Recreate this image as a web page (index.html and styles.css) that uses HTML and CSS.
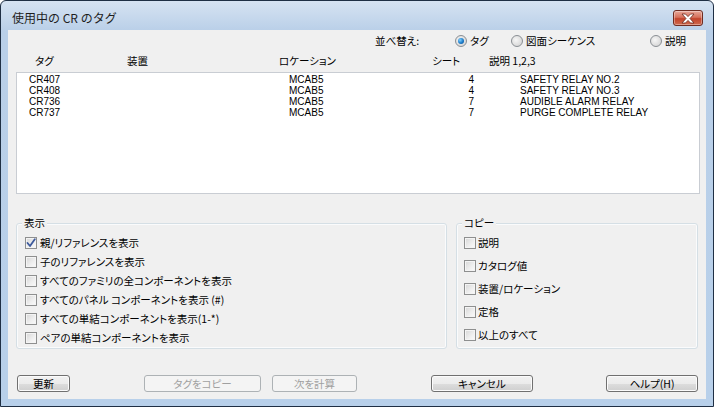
FILE: index.html
```html
<!DOCTYPE html>
<html lang="ja">
<head>
<meta charset="utf-8">
<title>使用中の CR のタグ</title>
<link rel="stylesheet" href="styles.css">
</head>
<body>
<div class="window">
  <div class="titlebar">
    <span class="title">使用中の CR のタグ</span>
    <div class="close">
      <svg width="16" height="11" viewBox="0 0 16 11"><path d="M2 1 L5.5 1 L8 3.6 L10.5 1 L14 1 L10 5.5 L14 10 L10.5 10 L8 7.4 L5.5 10 L2 10 L6 5.5 Z" fill="#fff" stroke="#6b2a20" stroke-width="0.8" stroke-linejoin="round"/></svg>
    </div>
  </div>
  <div class="content">
    <div class="sortrow">
      <span class="sortlabel">並べ替え:</span>
      <span class="ropt w1"><span class="radio on"></span><span>タグ</span></span>
      <span class="ropt w2"><span class="radio"></span><span>図面シーケンス</span></span>
      <span class="ropt"><span class="radio"></span><span>説明</span></span>
    </div>
    <div class="colheads">
      <span>タグ</span><span>装置</span><span>ロケーション</span><span>シート</span><span>説明 1,2,3</span>
    </div>
    <div class="listbox">
      <div class="row"><span>CR407</span><span>MCAB5</span><span class="num">4</span><span class="desc">SAFETY RELAY NO.2</span></div>
      <div class="row"><span>CR408</span><span>MCAB5</span><span class="num">4</span><span class="desc">SAFETY RELAY NO.3</span></div>
      <div class="row"><span>CR736</span><span>MCAB5</span><span class="num">7</span><span class="desc">AUDIBLE ALARM RELAY</span></div>
      <div class="row"><span>CR737</span><span>MCAB5</span><span class="num">7</span><span class="desc">PURGE COMPLETE RELAY</span></div>
    </div>
    <div class="groups">
      <div class="group show">
        <span class="glabel">表示</span>
        <div class="crow"><span class="cb checked"><svg width="10" height="10" viewBox="0 0 10 10"><path d="M1.5 5 L4 8 L8.8 1.2" fill="none" stroke="#3d5a9c" stroke-width="1.8" stroke-linecap="round" stroke-linejoin="round"/></svg></span><span>親/リファレンスを表示</span></div>
        <div class="crow"><span class="cb"></span><span>子のリファレンスを表示</span></div>
        <div class="crow"><span class="cb"></span><span>すべてのファミリの全コンポーネントを表示</span></div>
        <div class="crow"><span class="cb"></span><span>すべてのパネル コンポーネントを表示 (#)</span></div>
        <div class="crow"><span class="cb"></span><span>すべての単結コンポーネントを表示(1-*)</span></div>
        <div class="crow"><span class="cb"></span><span>ペアの単結コンポーネントを表示</span></div>
      </div>
      <div class="group copy">
        <span class="glabel">コピー</span>
        <div class="crow"><span class="cb"></span><span>説明</span></div>
        <div class="crow"><span class="cb"></span><span>カタログ値</span></div>
        <div class="crow"><span class="cb"></span><span>装置/ロケーション</span></div>
        <div class="crow"><span class="cb"></span><span>定格</span></div>
        <div class="crow"><span class="cb"></span><span>以上のすべて</span></div>
      </div>
    </div>
    <div class="buttons">
      <span class="btn b1">更新</span>
      <span class="btn b2 disabled">タグをコピー</span>
      <span class="btn b3 disabled">次を計算</span>
      <span class="btn b4">キャンセル</span>
      <span class="btn b5">ヘルプ(H)</span>
    </div>
  </div>
</div>
</body>
</html>
```
FILE: styles.css
```css
* { box-sizing: border-box; }
html, body { margin: 0; padding: 0; background: #ffffff; }
body {
  font-family: "Noto Sans CJK JP", "Noto Sans", sans-serif;
  font-size: 10.5px;
  color: #000;
  font-feature-settings: "palt";
}
.window {
  width: 714px;
  height: 407px;
  border: 1px solid #1f2f44;
  border-radius: 6px 6px 0 0;
  background: linear-gradient(to bottom, #d6e3f2 0px, #b9cfe8 30px, #b8d0ea 100%);
  display: flex;
  flex-direction: column;
  overflow: hidden;
}
.titlebar {
  height: 29px;
  flex: none;
  display: flex;
  align-items: flex-start;
  justify-content: space-between;
  padding: 9px 10px 0 11px;
}
.title {
  font-size: 12px;
  line-height: 16px;
  font-feature-settings: normal;
  color: #1e1e1e;
}
.close {
  width: 30px;
  height: 16px;
  border: 1px solid #6e2c22;
  border-radius: 3px;
  background: linear-gradient(to bottom, #e8a89a 0%, #d6715c 45%, #c2432b 55%, #cf6a4f 100%);
  display: flex;
  align-items: center;
  justify-content: center;
  box-shadow: inset 0 0 0 1px rgba(255,255,255,0.35);
}
.content {
  flex: 1;
  margin: 0 7px 7px 7px;
  background: #f0f0f0;
  padding: 0 8px;
  display: flex;
  flex-direction: column;
}
.sortrow {
  margin-top: 4px;
  height: 14px;
  display: flex;
  align-items: center;
  padding-left: 359px;
  line-height: 14px;
}
.sortlabel { width: 80px; }
.ropt { display: flex; align-items: center; gap: 3px; }
.ropt.w1 { width: 56px; }
.ropt.w2 { width: 139px; }
.radio {
  width: 12px;
  height: 12px;
  border-radius: 50%;
  border: 1px solid #8a8f94;
  background: radial-gradient(circle at 40% 40%, #f6f6f6 0%, #dadada 70%, #cfcfcf 100%);
  display: flex;
  align-items: center;
  justify-content: center;
}
.radio.on::after {
  content: "";
  width: 6px;
  height: 6px;
  border-radius: 50%;
  background: radial-gradient(circle at 35% 35%, #7fd0ff 0%, #1b7ac8 55%, #0d4f8f 100%);
}
.colheads {
  margin-top: 6px;
  height: 14px;
  line-height: 14px;
  display: grid;
  grid-template-columns: 92px 152px 153px 57px auto;
  padding-left: 19px;
}
.listbox {
  margin-top: 4px;
  margin-right: -2px;
  height: 122px;
  background: #fff;
  border: 1px solid #c9cdd3;
  padding-top: 1px;
  padding-left: 12px;
  font-family: "Liberation Sans", Arial, sans-serif;
  font-size: 10px;
  font-feature-settings: normal;
}
.row {
  display: grid;
  grid-template-columns: 260px 130px 55px auto;
  height: 11px;
  line-height: 11px;
}
.row .num { text-align: right; }
.row .desc { padding-left: 46px; }
.groups {
  margin-top: 29px;
  display: flex;
  gap: 9px;
  height: 126px;
}
.group {
  position: relative;
  border: 1px solid #d5dfe5;
  border-radius: 3px;
  box-shadow: inset 0 0 0 1px #fafbfc;
  display: flex;
  flex-direction: column;
}
.group.show { width: 431px; padding: 9px 0 0 8px; }
.group.copy { flex: 1; padding: 7px 0 0 7px; }
.glabel {
  position: absolute;
  top: -8px;
  left: 5px;
  padding: 0 2px;
  background: #f0f0f0;
  line-height: 14px;
}
.crow {
  display: flex;
  align-items: center;
  gap: 3px;
  height: 19px;
}
.group.copy .crow { height: 23px; gap: 2px; }
.cb {
  width: 12px;
  height: 12px;
  border: 1px solid #8e8f8f;
  background: linear-gradient(135deg, #d6d6d6 0%, #efefef 60%, #fbfbfb 100%);
  box-shadow: inset 0 0 0 1px #f4f4f4;
  display: flex;
  align-items: center;
  justify-content: center;
}
.buttons {
  margin-top: 26px;
  display: flex;
  padding-left: 1px;
}
.btn {
  height: 17px;
  border: 1px solid #707070;
  border-radius: 3px;
  background: linear-gradient(to bottom, #f2f2f2 0%, #ebebeb 50%, #dddddd 51%, #cfcfcf 100%);
  display: flex;
  align-items: center;
  justify-content: center;
  line-height: 14px;
  box-shadow: inset 0 0 0 1px #fbfbfb;
}
.btn.disabled {
  border-color: #adb2b5;
  background: #f4f4f4;
  color: #a0a0a0;
  box-shadow: none;
}
.b1 { width: 53px; }
.b2 { width: 117px; margin-left: 74px; }
.b3 { width: 85px; margin-left: 11px; }
.b4 { width: 102px; margin-left: 74px; }
.b5 { width: 92px; margin-left: 73px; }
```
